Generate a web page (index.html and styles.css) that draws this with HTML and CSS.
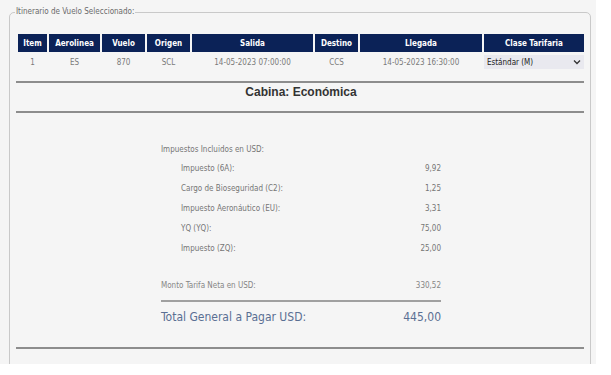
FILE: index.html
```html
<!DOCTYPE html>
<html lang="es">
<head>
<meta charset="utf-8">
<title>Itinerario</title>
<link rel="stylesheet" href="styles.css">
</head>
<body>
<div class="page">
  <fieldset class="box">
    <legend class="legend">Itinerario de Vuelo Seleccionado:</legend>
    <table class="itin">
      <colgroup>
        <col class="c-item"><col class="c-aer"><col class="c-vuelo"><col class="c-orig"><col class="c-sal"><col class="c-dest"><col class="c-lleg"><col class="c-clase">
      </colgroup>
      <thead>
        <tr><th>Item</th><th>Aerolinea</th><th>Vuelo</th><th>Origen</th><th>Salida</th><th>Destino</th><th>Llegada</th><th>Clase Tarifaria</th></tr>
      </thead>
      <tbody>
        <tr>
          <td>1</td><td>ES</td><td>870</td><td>SCL</td><td>14-05-2023 07:00:00</td><td>CCS</td><td>14-05-2023 16:30:00</td>
          <td class="sel-cell"><div class="select"><span>Estándar (M)</span><svg class="chev" width="8" height="6" viewBox="0 0 8 6"><path d="M1 1.5 L4 4.5 L7 1.5" fill="none" stroke="#333" stroke-width="1.3"/></svg></div></td>
        </tr>
      </tbody>
    </table>
    <div class="rule"></div>
    <div class="cabina">Cabina: Económica</div>
    <div class="rule"></div>
    <div class="taxes">
      <div class="tax-title">Impuestos Incluidos en USD:</div>
      <div class="tax-row"><span>Impuesto (6A):</span><span>9,92</span></div>
      <div class="tax-row"><span>Cargo de Bioseguridad (C2):</span><span>1,25</span></div>
      <div class="tax-row"><span>Impuesto Aeronáutico (EU):</span><span>3,31</span></div>
      <div class="tax-row"><span>YQ (YQ):</span><span>75,00</span></div>
      <div class="tax-row"><span>Impuesto (ZQ):</span><span>25,00</span></div>
      <div class="neta"><span>Monto Tarifa Neta en USD:</span><span>330,52</span></div>
      <div class="sum-rule"></div>
      <div class="total"><span>Total General a Pagar USD:</span><span>445,00</span></div>
    </div>
    <div class="rule bottom"></div>
  </fieldset>
</div>
</body>
</html>
```
FILE: styles.css
```css
html, body {
  margin: 0;
  padding: 0;
  background: #ffffff;
}
.page {
  width: 596px;
  height: 364px;
  background: #f5f5f5;
  overflow: hidden;
  padding: 5px 0 0 9px;
  box-sizing: border-box;
  font-family: "DejaVu Sans Condensed", "DejaVu Sans", sans-serif;
  font-size: 8px;
  color: #757575;
}
.box {
  margin: 0;
  width: 582px;
  box-sizing: border-box;
  border: 1px solid #c9c9c9;
  border-radius: 5px 5px 0 0;
  padding: 13px 4px 40px 6px;
  min-height: 420px;
}
.legend {
  padding: 0 1px;
  margin-left: -1px;
  line-height: 14px;
  font-size: 8px;
  color: #6a6a6a;
}
.itin {
  width: 570px;
  table-layout: fixed;
  border-collapse: separate;
  border-spacing: 2px;
}
.c-item { width: 29px; }
.c-aer { width: 51px; }
.c-vuelo { width: 43px; }
.c-orig { width: 43px; }
.c-sal { width: 121px; }
.c-dest { width: 43px; }
.c-lleg { width: 122px; }
.c-clase { width: 100px; }
.itin th {
  background: #0b2257;
  color: #ffffff;
  font-weight: bold;
  font-size: 8px;
  height: 18px;
  padding: 0;
  text-align: center;
}
.itin td {
  height: 16px;
  padding: 0;
  text-align: center;
  color: #7a7a7a;
}
.itin td.sel-cell {
  text-align: left;
}
.select {
  display: flex;
  align-items: center;
  justify-content: space-between;
  height: 14px;
  padding: 0 3px 0 3px;
  background: #e9e9ef;
  color: #222;
  font-size: 8px;
}
.rule {
  height: 0;
  border-top: 2px solid #8d8d8d;
  margin: 9px 2px 0 0;
}
.cabina {
  font-family: "Liberation Sans", Arial, sans-serif;
  font-weight: bold;
  font-size: 12px;
  color: #333;
  text-align: center;
  line-height: 14px;
  padding: 2px 0 12px;
}
.cabina + .rule {
  margin-top: 0;
}
.taxes {
  width: 280px;
  margin: 28px auto 0;
}
.tax-title {
  line-height: 18px;
}
.tax-row {
  display: flex;
  justify-content: space-between;
  line-height: 20px;
  padding-left: 20px;
}
.neta {
  display: flex;
  justify-content: space-between;
  line-height: 14px;
  margin-top: 20px;
  font-size: 8px;
  color: #858585;
}
.sum-rule {
  border-top: 2px solid #a0a0a0;
  margin-top: 7px;
}
.total {
  display: flex;
  justify-content: space-between;
  line-height: 20px;
  margin-top: 5px;
  font-size: 12px;
  color: #5a6f93;
}
.rule.bottom {
  margin-top: 20px;
}
```
